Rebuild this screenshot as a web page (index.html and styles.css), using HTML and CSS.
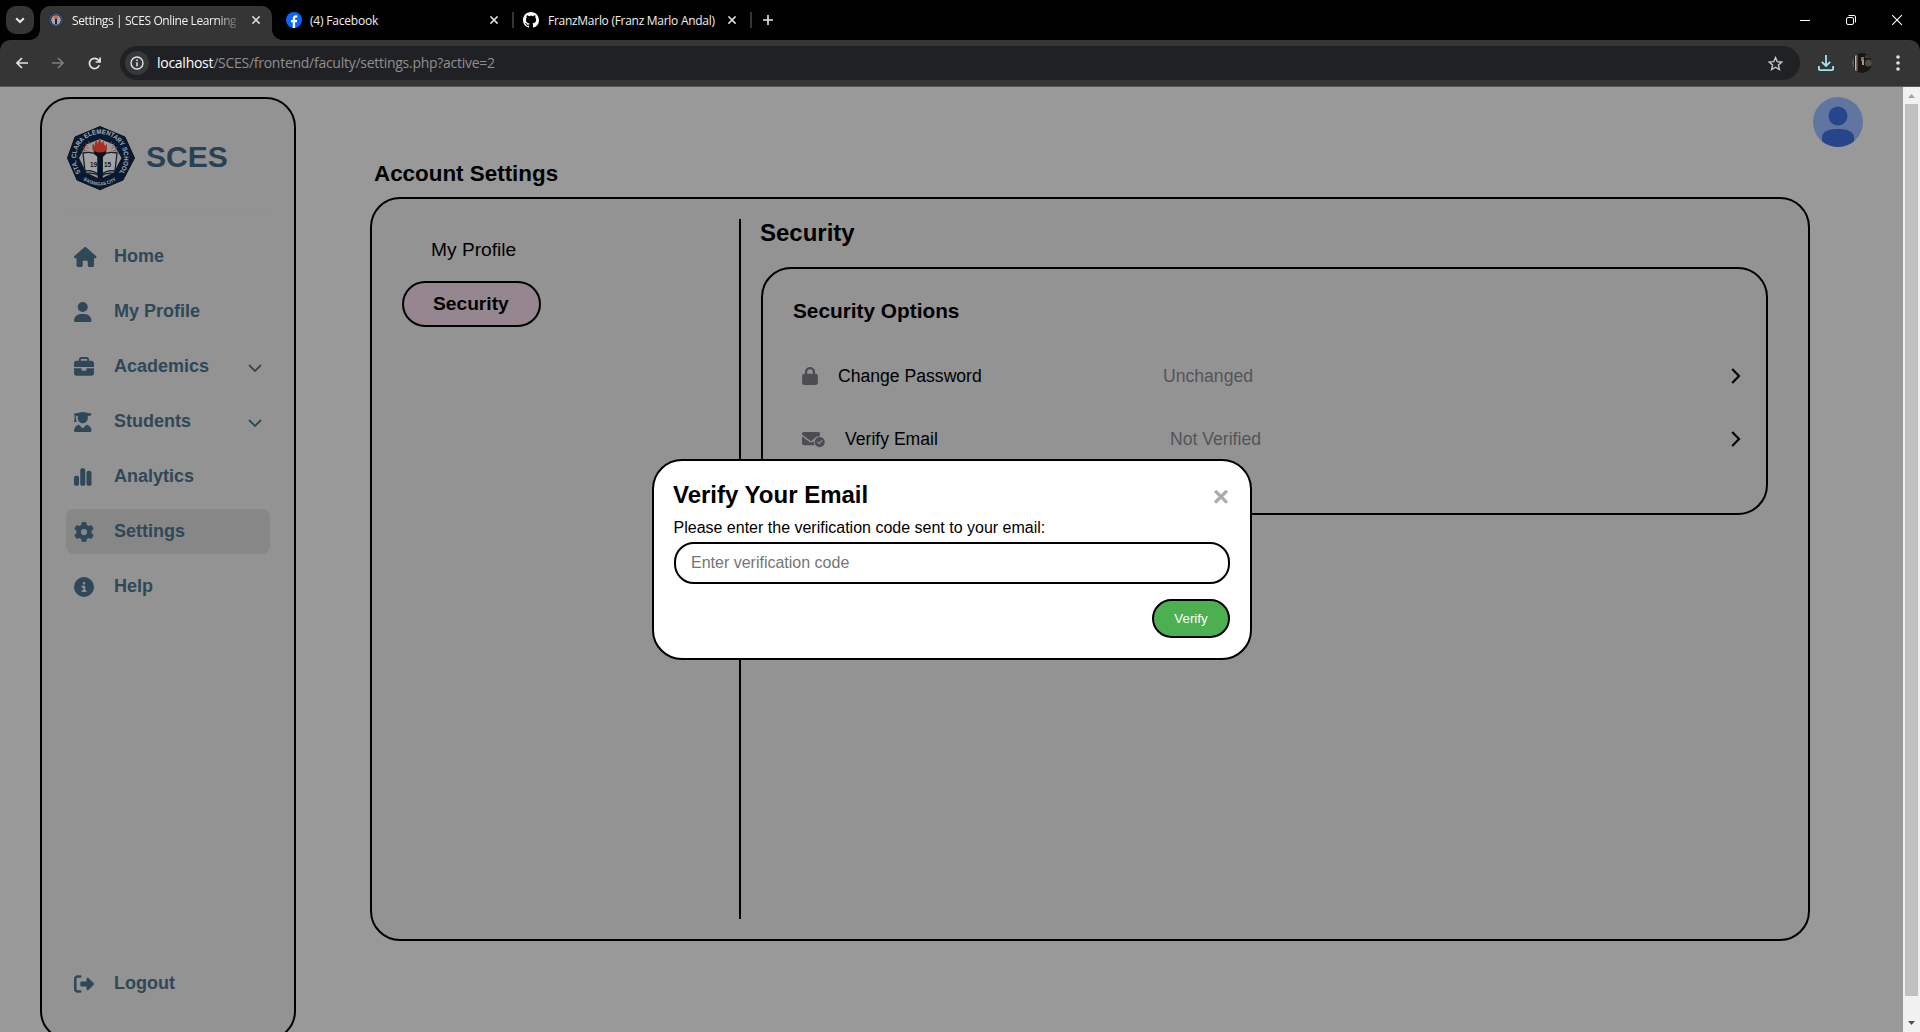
FILE: index.html
```html
<!DOCTYPE html>
<html lang="en">
<head>
<meta charset="utf-8">
<title>Settings | SCES Online Learning</title>
<link rel="stylesheet" href="styles.css">
</head>
<body>
<svg width="0" height="0" class="defs">
  <symbol id="close" viewBox="0 0 10 10"><path d="M1 1 9 9M9 1 1 9" stroke="#e3e3e3" stroke-width="1.700"/></symbol>
  <symbol id="down" viewBox="0 0 14 8"><path d="M1 1 7 7 13 1" fill="none" stroke="#2f4858" stroke-width="1.800"/></symbol>
  <symbol id="right" viewBox="0 0 10 16"><path d="M1.200 1 8 8 1.200 15" fill="none" stroke="#000" stroke-width="2.200"/></symbol>
</svg>

<header class="browser">
  <div class="tabs">
    <button class="tab-search"><svg width="10" height="7" viewBox="0 0 10 7"><path d="M1.200 1.200 5 5 8.800 1.200" fill="none" stroke="#e8e8e8" stroke-width="2"/></svg></button>
    <div class="tab tab-active">
      <svg class="fav" viewBox="0 0 16 16"><circle cx="8" cy="8" r="7.500" fill="#18283d"/><circle cx="8" cy="8" r="6.200" fill="none" stroke="#8f9aa6" stroke-width="1" stroke-dasharray="1 .8"/><circle cx="8" cy="8" r="4.800" fill="#aaa5a6"/><path d="M5.500 4.500H10.500L9.500 7H6.500Z" fill="#e0523a"/><path d="M7 7H9V12H7Z" fill="#14243a"/></svg>
      <span class="tab-title fade">Settings | SCES Online Learning</span>
      <svg class="tab-x"><use href="#close"/></svg>
    </div>
    <div class="tab tab-fb">
      <svg class="fav" viewBox="0 0 16 16"><circle cx="8" cy="8" r="8" fill="#0866ff"/><path d="M6.800 16V10.300H5V7.900H6.800V6.700C6.800 4.400 7.900 3.200 10 3.200L11.300 3.400V5.400H10.300C9.400 5.400 9.100 5.900 9.100 6.600V7.900H11.200L10.800 10.300H9.100V16Z" fill="#fff"/></svg>
      <span class="tab-title fb-title">(4) Facebook</span>
      <svg class="tab-x"><use href="#close"/></svg>
    </div>
    <i class="sep"></i>
    <div class="tab tab-gh">
      <svg class="fav" viewBox="0 0 16 16"><path fill="#fff" d="M8 0C3.580 0 0 3.580 0 8c0 3.540 2.290 6.530 5.470 7.590.4.070.55-.17.55-.38 0-.19-.01-.82-.01-1.490-2.010.37-2.530-.49-2.690-.94-.09-.23-.48-.94-.82-1.130-.28-.15-.68-.52-.01-.53.63-.01 1.080.58 1.230.82.72 1.210 1.870.87 2.330.66.070-.52.28-.87.51-1.070-1.780-.2-3.640-.89-3.640-3.950 0-.87.31-1.590.82-2.150-.08-.2-.36-1.020.080-2.120 0 0 .67-.21 2.200.82.64-.18 1.320-.27 2-.27.68 0 1.360.09 2 .27 1.530-1.040 2.200-.82 2.200-.82.44 1.100.16 1.920.080 2.120.51.56.82 1.270.82 2.150 0 3.070-1.870 3.750-3.650 3.950.29.25.54.73.54 1.480 0 1.070-.01 1.930-.01 2.200 0 .21.15.46.55.38A8.013 8.013 0 0 0 16 8c0-4.420-3.580-8-8-8z"/></svg>
      <span class="tab-title gh-title">FranzMarlo (Franz Marlo Andal)</span>
      <svg class="tab-x"><use href="#close"/></svg>
    </div>
    <i class="sep"></i>
    <svg class="plus" width="10" height="10" viewBox="0 0 10 10"><path d="M5 0V10M0 5H10" stroke="#e8e8e8" stroke-width="1.600"/></svg>
    <div class="window-controls">
      <svg width="10" height="10" viewBox="0 0 10 10"><path d="M0 5.500H10" stroke="#fff"/></svg>
      <svg width="10" height="10" viewBox="0 0 10 10" fill="none" stroke="#fff"><rect x=".5" y="2.500" width="7" height="7" rx="1.500"/><path d="M2.500.5H8Q9.500.5 9.500 2V7.500"/></svg>
      <svg width="10" height="10" viewBox="0 0 10 10"><path d="M0 0 10 10M10 0 0 10" stroke="#fff" stroke-width="1.100"/></svg>
    </div>
  </div>
  <div class="toolbar">
    <svg width="12" height="12" viewBox="0 0 12 12" fill="none" stroke="#e3e3e3" stroke-width="1.600"><path d="M12 6H1.200M6 1 1 6 6 11"/></svg>
    <svg width="12" height="12" viewBox="0 0 12 12" fill="none" stroke="#7d7d7d" stroke-width="1.600"><path d="M0 6H10.800M6 1 11 6 6 11"/></svg>
    <svg width="13" height="13" viewBox="0 0 13 13" fill="none" stroke="#e3e3e3" stroke-width="1.700"><path d="M11.300 8.300A5.100 5.100 0 1 1 10.500 3.200L12 4.800M12.100.5V5H7.600"/></svg>
    <div class="address">
      <span class="info"><svg width="14" height="14" viewBox="0 0 14 14"><circle cx="7" cy="7" r="6" fill="none" stroke="#e3e3e3" stroke-width="1.400"/><path d="M7 6.200V10.300M7 3.600V5" stroke="#e3e3e3" stroke-width="1.500"/></svg></span>
      <span class="url"><b>localhost</b>/SCES/frontend/faculty/settings.php?active=2</span>
      <svg class="star" width="15" height="15" viewBox="0 0 15 15"><path d="M7.500 1.600 9.300 5.700 13.800 6.100 10.400 9.100 11.400 13.500 7.500 11.200 3.600 13.500 4.600 9.100 1.200 6.100 5.700 5.700Z" fill="none" stroke="#c7c7c7" stroke-width="1.400"/></svg>
    </div>
    <svg class="download" width="16" height="16" viewBox="0 0 16 16" fill="none" stroke="#a0e4f1" stroke-width="1.800"><path d="M8 0V11M3.800 6.800 8 11 12.200 6.800M.9 11V14Q.9 15.100 2 15.100H14Q15.100 15.100 15.100 14V11"/></svg>
    <svg class="me" width="20" height="20" viewBox="0 0 20 20"><clipPath id="round"><circle cx="10" cy="10" r="10"/></clipPath><g clip-path="url(#round)"><path d="M0 0H20V20H0Z" fill="#1c1517"/><path d="M0 0H2V20H0Z" fill="#6f5549"/><path d="M3 0H4.500V20H3Z" fill="#c7b9ac"/><path d="M5 2H6V18H5Z" fill="#554037"/><path d="M9 4H12V8H9Z" fill="#62758a"/><path d="M10 7H12V12H10Z" fill="#b98f79"/><circle cx="16.500" cy="10" r="3.500" fill="#49513f"/><path d="M13 2H20V5H13Z" fill="#4a3029"/></g></svg>
    <svg width="4" height="16" viewBox="0 0 4 16" fill="#e3e3e3"><circle cx="2" cy="2" r="1.800"/><circle cx="2" cy="8" r="1.800"/><circle cx="2" cy="14" r="1.800"/></svg>
  </div>
</header>

<div class="viewport">
  <div class="page">
    <aside class="sidebar">
      <div class="brand">
        <svg class="seal" width="68" height="64" viewBox="0 0 68 64">
          <path d="M33 0.500 58 11 67.500 32 56 54 33 63.700 10 54 0.500 32 8 11Z" fill="#071a33" stroke="#0a0f18" stroke-width="1"/>
          <path d="M33 12.500 47 18 55 32 47 47 33 53.500 19 47 11.500 32 19 18Z" fill="#9b9999" stroke="#0c1626" stroke-width="1"/>
          <path d="M17 26 14.500 25M18 23 15.500 21M20.500 20 18.500 17.500M23 18 21.500 15.500M43 18 44.500 15.500M45.500 20 47.500 17.500M48 23 50.500 21M49 26 51.500 25M20 25 17 24M46 25 49 24M21.500 22.500 19.500 21M44.500 22.500 46.500 21" stroke="#9b4a44" stroke-width="1"/>
          <path d="M16 27Q25 25 31 29V48Q25 43.500 18 45ZM50 27Q41 25 35 29V48Q41 43.500 48 45Z" fill="#a3a3a3" stroke="#16202c" stroke-width="1.300"/>
          <path d="M18 47.500Q27 46 33 50.500Q40 46 48 47.500" fill="none" stroke="#16202c" stroke-width="1.200"/>
          <path d="M28 27C24 23 26 20 25.500 17.500Q27.500 18.500 28 20.500Q27.500 16 29.500 14Q30 16.500 31 18Q31 14.500 33 12.500Q33.500 16 35 17.500Q35.500 15.500 36.500 14.500Q36.500 18 38 20Q39 18.500 40 18C39.500 22 41 25 38 27Z" fill="#a92d20"/>
          <path d="M27 25Q33 28 39 25V28L35.800 31V53H30.700V31L27 28Z" fill="#071426"/>
          <text x="23" y="40.500" class="seal-year">19</text><text x="37" y="40.500" class="seal-year">15</text>
          <path id="seal-arc" d="M13.800 46.400A24 24 0 1 1 52.200 46.400" fill="none"/>
          <path id="seal-low" d="M15.600 53.200A27.400 27.400 0 0 0 50.400 53.200" fill="none"/>
          <text class="seal-ring" textLength="106" lengthAdjust="spacingAndGlyphs"><textPath href="#seal-arc">STA. CLARA ELEMENTARY SCHOOL</textPath></text>
          <text class="seal-city" textLength="35" lengthAdjust="spacingAndGlyphs"><textPath href="#seal-low" startOffset="1">BATANGAS CITY</textPath></text>
        </svg>
        <span>SCES</span>
      </div>
      <nav class="menu">
        <a class="item"><svg class="ico" width="22.500" viewBox="0 0 576 512"><path d="M575.800 255.500c0 18-15 32.100-32 32.100h-32l.7 160.200c0 2.700-.2 5.400-.5 8.100V472c0 22.100-17.900 40-40 40H392c-22.100 0-40-17.900-40-40V384c0-17.700-14.300-32-32-32H256c-17.700 0-32 14.300-32 32v88c0 22.100-17.900 40-40 40H104c-22.100 0-40-17.900-40-40V287.600H32c-18 0-32-14-32-32.100c0-9 3-17 10-24L266.400 8c7-7 15-8 22-8s15 2 21 7L564.800 231.500c8 7 12 15 11 24z"/></svg><span>Home</span></a>
        <a class="item"><svg class="ico" width="17.500" viewBox="0 0 448 512"><path d="M224 256A128 128 0 1 0 224 0a128 128 0 1 0 0 256zm-45.700 48C79.800 304 0 383.800 0 482.300C0 498.700 13.300 512 29.700 512H418.300c16.400 0 29.700-13.300 29.700-29.700C448 383.800 368.200 304 269.700 304H178.300z"/></svg><span>My Profile</span></a>
        <a class="item"><svg class="ico" width="20" viewBox="0 0 512 512"><path d="M184 48H328c4.400 0 8 3.600 8 8V96H176V56c0-4.400 3.600-8 8-8zm-56 8V96H64C28.700 96 0 124.700 0 160v96H512V160c0-35.300-28.700-64-64-64H384V56c0-30.900-25.100-56-56-56H184c-30.900 0-56 25.100-56 56zM512 288H320v32c0 17.700-14.300 32-32 32H224c-17.700 0-32-14.300-32-32V288H0V416c0 35.300 28.700 64 64 64H448c35.300 0 64-28.700 64-64V288z"/></svg><span>Academics</span><svg class="chev" width="14" height="8"><use href="#down"/></svg></a>
        <a class="item"><svg class="ico" width="17.500" viewBox="0 0 448 512"><path d="M219.300 .5c3.100-.6 6.300-.6 9.400 0l200 40C439.900 42.700 448 52.600 448 64s-8.100 21.300-19.300 23.500L352 102.900V160c0 70.700-57.300 128-128 128s-128-57.300-128-128V102.900L48 93.300v65.100l15.700 78.400c.9 4.700-.3 9.600-3.300 13.300s-7.600 5.900-12.400 5.900H16c-4.800 0-9.300-2.100-12.400-5.900s-4.300-8.600-3.300-13.300L16 158.400V86.600C6.500 83.300 0 74.300 0 64C0 52.600 8.100 42.700 19.300 40.500l200-40zM111.900 327.700c10.500-3.400 21.800 .4 29.400 8.500l71 75.500c6.300 6.700 17 6.700 23.300 0l71-75.500c7.600-8.100 18.900-11.900 29.400-8.500C401 348.600 448 409.400 448 481.300c0 17-13.800 30.700-30.700 30.700H30.700C13.800 512 0 498.200 0 481.300c0-71.900 47-132.700 111.900-153.600z"/></svg><span>Students</span><svg class="chev" width="14" height="8"><use href="#down"/></svg></a>
        <a class="item"><svg class="ico" width="17.500" viewBox="0 0 448 512"><path d="M160 80c0-26.500 21.500-48 48-48h32c26.500 0 48 21.500 48 48V432c0 26.500-21.500 48-48 48H208c-26.500 0-48-21.500-48-48V80zM0 272c0-26.500 21.500-48 48-48H80c26.500 0 48 21.500 48 48V432c0 26.500-21.500 48-48 48H48c-26.500 0-48-21.500-48-48V272zM368 96h32c26.500 0 48 21.500 48 48V432c0 26.500-21.500 48-48 48H368c-26.500 0-48-21.500-48-48V144c0-26.500 21.500-48 48-48z"/></svg><span>Analytics</span></a>
        <a class="item current"><svg class="ico" width="20" viewBox="0 0 512 512"><path d="M495.900 166.600c3.200 8.700 .5 18.400-6.400 24.600l-43.300 39.400c1.100 8.300 1.700 16.800 1.700 25.400s-.6 17.100-1.700 25.400l43.300 39.400c6.900 6.200 9.600 15.900 6.400 24.600c-4.400 11.900-9.700 23.300-15.800 34.300l-4.700 8.100c-6.600 11-14 21.400-22.100 31.200c-5.900 7.200-15.700 9.600-24.500 6.800l-55.700-17.700c-13.400 10.300-28.200 18.900-44 25.400l-12.500 57.100c-2 9.100-9 16.300-18.200 17.800c-13.800 2.300-28 3.500-42.500 3.500s-28.700-1.200-42.500-3.500c-9.200-1.500-16.200-8.700-18.200-17.800l-12.500-57.100c-15.800-6.500-30.600-15.100-44-25.400L83.100 425.900c-8.800 2.800-18.600 .3-24.500-6.800c-8.100-9.800-15.500-20.200-22.100-31.200l-4.700-8.100c-6.100-11-11.400-22.400-15.800-34.300c-3.200-8.700-.5-18.400 6.400-24.600l43.300-39.400C64.600 273.100 64 264.600 64 256s.6-17.100 1.700-25.400L22.400 191.200c-6.900-6.200-9.600-15.900-6.400-24.600c4.400-11.900 9.700-23.300 15.800-34.300l4.700-8.100c6.600-11 14-21.400 22.100-31.200c5.900-7.200 15.700-9.600 24.500-6.800l55.700 17.700c13.400-10.300 28.200-18.900 44-25.400l12.500-57.100c2-9.100 9-16.300 18.200-17.800C227.300 1.200 241.500 0 256 0s28.700 1.200 42.500 3.500c9.200 1.500 16.200 8.700 18.200 17.800l12.500 57.100c15.800 6.500 30.600 15.100 44 25.400l55.700-17.700c8.800-2.800 18.600-.3 24.500 6.800c8.100 9.800 15.500 20.200 22.100 31.200l4.700 8.100c6.100 11 11.400 22.400 15.800 34.300zM256 336a80 80 0 1 0 0-160 80 80 0 1 0 0 160z"/></svg><span>Settings</span></a>
        <a class="item"><svg class="ico" width="20" viewBox="0 0 512 512"><path d="M256 512A256 256 0 1 0 256 0a256 256 0 1 0 0 512zM216 336h24V272H216c-13.300 0-24-10.700-24-24s10.700-24 24-24h48c13.300 0 24 10.700 24 24v88h8c13.300 0 24 10.700 24 24s-10.700 24-24 24H216c-13.300 0-24-10.700-24-24s10.700-24 24-24zm40-208a32 32 0 1 1 0 64 32 32 0 1 1 0-64z"/></svg><span>Help</span></a>
      </nav>
      <a class="item logout"><svg class="ico" width="20" viewBox="0 0 512 512"><path d="M377.900 105.900L500.700 228.700c7.200 7.200 11.300 17.100 11.300 27.300s-4.100 20.100-11.300 27.300L377.900 406.100c-6.400 6.400-15 9.900-24 9.900c-18.700 0-33.900-15.200-33.900-33.900l0-62.100-128 0c-17.700 0-32-14.300-32-32l0-64c0-17.700 14.300-32 32-32l128 0 0-62.100c0-18.700 15.200-33.900 33.900-33.900c9 0 17.600 3.600 24 9.900zM160 96L96 96c-17.700 0-32 14.300-32 32l0 256c0 17.700 14.300 32 32 32l64 0c17.700 0 32 14.300 32 32s-14.300 32-32 32l-64 0c-53 0-96-43-96-96L0 128C0 75 43 32 96 32l64 0c17.700 0 32 14.300 32 32s-14.300 32-32 32z"/></svg><span>Logout</span></a>
    </aside>

    <main class="main">
      <svg class="avatar" width="50" height="50" viewBox="0 0 50 50"><clipPath id="disc"><circle cx="25" cy="25" r="25"/></clipPath><circle cx="25" cy="25" r="25" fill="#60759f"/><circle cx="25" cy="19" r="9.500" fill="#26458b"/><path clip-path="url(#disc)" d="M9 50V41C9 34 16 32 25 32S41 34 41 41V50Z" fill="#26458b"/></svg>
      <h1>Account Settings</h1>
      <section class="panel">
        <div class="choices">
          <a class="choice">My Profile</a>
          <a class="choice chosen">Security</a>
        </div>
        <div class="detail">
          <h2>Security</h2>
          <div class="options">
            <h3>Security Options</h3>
            <div class="option">
              <svg width="16" height="18" viewBox="0 0 448 512"><path d="M144 144v48H304V144c0-44.200-35.800-80-80-80s-80 35.800-80 80zM80 192V144C80 64.500 144.500 0 224 0s144 64.500 144 144v48h16c35.300 0 64 28.700 64 64V448c0 35.300-28.700 64-64 64H64c-35.300 0-64-28.700-64-64V256c0-35.300 28.700-64 64-64H80z"/></svg>
              <span class="name">Change Password</span><span class="state">Unchanged</span>
              <svg class="go" width="10" height="16"><use href="#right"/></svg>
            </div>
            <div class="option">
              <svg width="23" height="18" viewBox="0 0 23 18"><path d="M1.700 2H16.300Q18 2 18 3.700L17.800 6.300Q14 6 12.500 8.500L9.800 10.700Q9 11.200 8.200 10.700L.6 5Q0 4.400 0 3.700Q0 2 1.700 2ZM0 6.200 7.600 11.900Q9 12.800 10.400 11.900L11.700 11Q11.300 13.500 12.700 15.300H2Q0 15.300 0 13.200Z"/><path fill-rule="evenodd" d="M17.700 7A5.100 5.100 0 1 1 17.700 17.200A5.100 5.100 0 1 1 17.700 7ZM15 12.200 17 14.200 20.500 10.700 19.800 10 17 12.800 15.700 11.500Z"/></svg>
              <span class="name">Verify Email</span><span class="state">Not Verified</span>
              <svg class="go" width="10" height="16"><use href="#right"/></svg>
            </div>
          </div>
        </div>
      </section>
    </main>

    <div class="overlay">
      <form class="modal">
        <div class="modal-head"><h2>Verify Your Email</h2><span class="dismiss">×</span></div>
        <label>Please enter the verification code sent to your email:</label>
        <input type="text" placeholder="Enter verification code">
        <button type="button" class="verify">Verify</button>
      </form>
    </div>
  </div>
  <div class="scrollbar">
    <svg width="17" height="17" viewBox="0 0 17 17"><path d="M5 11 8.500 7 12 11Z" fill="#a3a3a3"/></svg>
    <div class="thumb"></div>
    <svg width="17" height="17" viewBox="0 0 17 17"><path d="M5 6 8.500 10 12 6Z" fill="#505050"/></svg>
  </div>
</div>
</body>
</html>
```
FILE: styles.css
```css
* { box-sizing: border-box; }
body { margin: 0; width: 1920px; height: 1032px; overflow: hidden; display: flex; flex-direction: column; background: #999; font-family: "Liberation Sans", Arial, sans-serif; color: #000; }
h1, h2, h3 { margin: 0; font-weight: bold; }
svg { display: block; flex: none; }
.defs { position: absolute; }
.seal { overflow: visible; }
.seal-year { font: bold 6.500px "Liberation Sans", sans-serif; fill: #101820; }
.seal-ring { font: bold 6.600px "Liberation Sans", sans-serif; fill: #a9abae; }
.seal-city { font: bold 4.800px "Liberation Sans", sans-serif; fill: #a9abae; }

/* browser chrome */
.browser { height: 87px; flex: none; background: #000; font-family: "Open Sans", "Noto Sans", sans-serif; }
.tabs { height: 40px; display: flex; align-items: center; }
.tab-search { width: 28px; height: 28px; margin: 0 6px; padding: 0; border: 0; border-radius: 10px; background: #353535; display: flex; align-items: center; justify-content: center; }
.tab { display: flex; align-items: center; }
.tab-active { position: relative; width: 232px; height: 34px; margin-top: 6px; padding: 0 11px 6px 8px; background: #353535; border-radius: 10px 10px 0 0; }
.tab-active::before, .tab-active::after { content: ""; position: absolute; bottom: 0; width: 10px; height: 10px; }
.tab-active::before { left: -10px; background: radial-gradient(circle at 0 0, transparent 9.500px, #353535 10px); }
.tab-active::after { right: -10px; background: radial-gradient(circle at 100% 0, transparent 9.500px, #353535 10px); }
.fav { width: 16px; height: 16px; margin-right: 8px; }
.tab-title { flex: 1; padding-top: 2px; font-size: 12px; line-height: 18px; white-space: nowrap; overflow: hidden; color: #f0f0f0; }
.tab-x { width: 10px; height: 10px; padding: .5px; }
.fade { letter-spacing: -.4px; margin-right: 15px; -webkit-mask-image: linear-gradient(90deg, #000 88%, rgba(0, 0, 0, .25) 100%); }
.tab-fb { width: 213px; margin-left: 14px; }
.fb-title { letter-spacing: -.2px; }
.tab-gh { width: 214px; margin-left: 9px; }
.gh-title { padding-left: 1px; letter-spacing: -.28px; }
.sep { width: 2px; height: 16px; margin-left: 13px; background: #353535; }
.tab-gh .tab-x { margin-left: 4px; }
.plus { margin-left: 11px; }
.window-controls { margin-left: auto; margin-right: 18px; display: flex; gap: 36px; }
.toolbar { height: 47px; padding: 0 20px 0 16px; display: flex; align-items: center; background: #353535; border-radius: 10px 10px 0 0; border-bottom: 1px solid #5b5b5b; }
.toolbar > svg:nth-child(2) { margin-left: 24px; }
.toolbar > svg:nth-child(3) { margin-left: 24px; }
.address { width: 1680px; height: 34px; margin-left: 19px; padding: 0 17px 0 5px; display: flex; align-items: center; border-radius: 17px; background: #202124; }
.info { width: 24px; height: 24px; border-radius: 12px; background: #37383a; display: flex; align-items: center; justify-content: center; }
.url { flex: 1; margin-left: 8px; font-size: 14px; line-height: 20px; letter-spacing: -.27px; color: #8f8f8f; }
.url b { font-weight: normal; color: #fff; }
.download { margin-left: 18px; }
.me { margin-left: 18px; }
.me + svg { margin-left: auto; }

/* page */
.viewport { flex: 1; min-height: 0; display: flex; }
.page { position: relative; flex: 1; display: flex; align-items: flex-start; overflow: hidden; }
.sidebar { width: 256px; height: 944px; margin: 10px 0 0 40px; padding: 26px 24px 0 24px; flex: none; display: flex; flex-direction: column; border: 2px solid #000; border-radius: 30px; background: #939393; color: #2f4858; }
.brand { height: 91px; padding: 1px 0 0 1px; display: flex; align-items: flex-start; gap: 11px; border-bottom: 1px solid #909090; font-size: 30px; font-weight: bold; line-height: 61px; color: #294155; }
.menu { margin-top: 18px; display: flex; flex-direction: column; gap: 10px; }
.item { height: 45px; padding: 0 8px; display: grid; grid-template-columns: 40px 1fr auto; align-items: center; border-radius: 8px; font-size: 18px; font-weight: bold; line-height: 43px; }
.ico { height: 20px; fill: #2f4858; }
.chev { margin: 2px 0 0 0; }
.current { background: #878787; }
.logout { margin-top: 352px; }
.main { width: 1440px; margin-left: 74px; display: flex; flex-direction: column; }
.avatar { margin: 10px -53px 0 auto; }
h1 { margin: 13px 0 0 4px; font-size: 22.400px; line-height: 27px; }
.panel { height: 744px; margin-top: 10px; padding: 20px 40px 20px 30px; display: flex; border: 2px solid #000; border-radius: 30px; background: #939393; }
.choices { width: 339px; flex: none; padding-top: 10px; border-right: 2px solid #000; }
.choice { width: 139px; height: 46px; display: block; text-align: left; padding-left: 29px; font-size: 19.200px; line-height: 42px; }
.chosen { margin-top: 6px; border: 2px solid #000; border-radius: 23px; background: #96868f; font-weight: bold; line-height: 42px; }
.detail { flex: 1; padding-left: 20px; }
.detail h2 { margin-left: -1px; font-size: 24px; line-height: 28px; }
.options { height: 248px; margin-top: 20px; padding: 28px 25px 0 30px; border: 2px solid #000; border-radius: 30px; }
.options h3 { font-size: 20.800px; line-height: 28px; margin-bottom: 19px; }
.option { height: 63px; padding-left: 9px; display: flex; align-items: center; font-size: 17.600px; fill: #4b4d52; }
.option span { padding-top: 2px; }
.name { width: 305px; margin-left: 20px; flex: none; }
.state { width: 200px; margin-left: 20px; color: #545458; }
.go { margin-left: auto; }

/* dialog */
.overlay { position: absolute; inset: 0; display: flex; justify-content: center; align-items: flex-start; }
.modal { width: 600px; height: 201px; margin: 372px 0 0 1px; padding: 20px; display: flex; flex-direction: column; border: 2px solid #000; border-radius: 30px; background: #fff; }
.modal-head { height: 34px; display: flex; justify-content: space-between; align-items: center; }
.modal-head h2 { font-size: 24px; line-height: 28px; margin: -7px 0 0 -1px; }
.dismiss { font-size: 28px; font-weight: bold; line-height: 28px; margin: -3px 1px 0 0; color: #aaa; }
.modal label { height: 27px; font-size: 16px; line-height: 26px; margin-left: -.5px; }
.modal input { width: 556px; height: 42px; padding: 0 15px; border: 2px solid #000; border-radius: 20px; background: #fff; font: 16px "Liberation Sans", Arial, sans-serif; }
.modal input::placeholder { color: #757575; }
.verify { width: 78px; height: 39px; margin: 15px 0 0 auto; padding: 0; border: 2px solid #000; border-radius: 20px; background: #4caf50; color: #fff; font: 13.333px "Liberation Sans", Arial, sans-serif; }

.scrollbar { width: 17px; flex: none; display: flex; flex-direction: column; background: #f1f1f1; }
.thumb { height: 892px; margin: 0 2px; background: #c1c1c1; }
.scrollbar svg:last-child { margin-top: auto; }
```
